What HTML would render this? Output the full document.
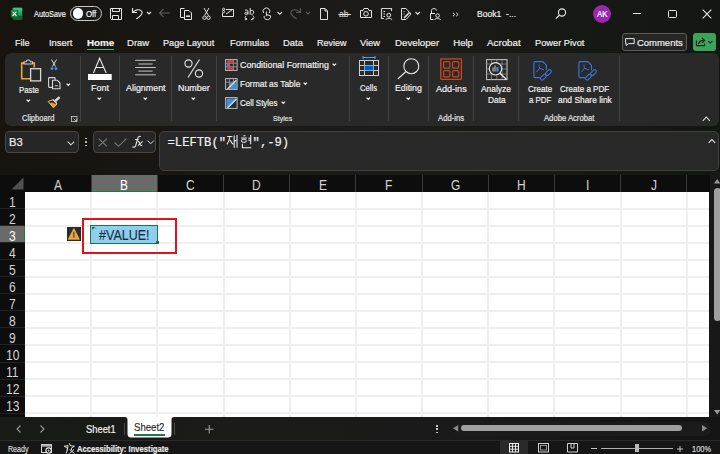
<!DOCTYPE html><html><head><meta charset="utf-8"><style>
html,body{margin:0;padding:0;}
body{width:720px;height:454px;overflow:hidden;position:relative;background:linear-gradient(90deg,#17130f 0%,#1a1814 30%,#1c1b19 50%,#181915 72%,#131712 100%);font-family:"Liberation Sans",sans-serif;}
.t{position:absolute;white-space:nowrap;line-height:1;transform-origin:0 0;-webkit-text-stroke:0.2px currentColor;}
.r{position:absolute;}
.s{position:absolute;overflow:visible;}
</style></head><body>
<svg class="s" style="left:10px;top:7px" width="13" height="13" viewBox="0 0 13 13"><rect x="2.8" y="0.7" width="9.4" height="11.7" rx="0.8" fill="#21a366"/><rect x="2.8" y="0.7" width="9.4" height="4" rx="0.8" fill="#33c481"/><rect x="2.8" y="8.6" width="9.4" height="3.8" rx="0.8" fill="#185c37"/><rect x="0.8" y="3" width="7.5" height="7.4" rx="0.7" fill="#107c41"/><path d="M2.6 4.6 L6.4 8.9 M6.4 4.6 L2.6 8.9" stroke="#fff" stroke-width="1.15"/></svg>
<div class="t" style="left:33.50px;top:10px;font-size:8.58px;color:#f0f0f0;transform:scaleX(0.855);">AutoSave</div>
<div class="r" style="left:70px;top:6px;width:31.5px;height:15px;border:1px solid #c8c8c8;border-radius:8px;box-sizing:border-box;background:#1c1b19"></div>
<div class="r" style="left:72.5px;top:8.4px;width:10.5px;height:10.5px;background:#fff;border-radius:50%"></div>
<div class="t" style="left:86.30px;top:10px;font-size:8.72px;color:#f0f0f0;transform:scaleX(0.898);">Off</div>
<svg class="s" style="left:109px;top:7px" width="14" height="14" viewBox="0 0 14 14"><path d="M1.5 1.5 H12.5 V12.5 H2.5 L1.5 11.5 Z M3.5 1.5 V4.5 H10.5 V1.5 M3.5 12.5 V8.5 H9.5 V12.5" fill="none" stroke="#e4e4e4" stroke-width="1"/></svg>
<svg class="s" style="left:130px;top:7px" width="22" height="13" viewBox="0 0 22 13"><path d="M2.5 1 V5.5 H7" fill="none" stroke="#e4e4e4" stroke-width="1.1"/><path d="M2.8 5.3 C5 2.6 9.2 2 11.3 3.8 C13.2 5.6 12.5 8 6.3 12" fill="none" stroke="#e4e4e4" stroke-width="1.1"/><path d="M17 5 L19 7 L21 5" fill="none" stroke="#e4e4e4" stroke-width="1.1"/></svg>
<svg class="s" style="left:158px;top:8px" width="13" height="10" viewBox="0 0 13 10"><path d="M12 5 H1.5 M5.5 1 L1.5 5 L5.5 9" fill="none" stroke="#5c5c5c" stroke-width="1.1"/></svg>
<svg class="s" style="left:179px;top:7px" width="14" height="14" viewBox="0 0 14 14"><path d="M5.5 10.5 H1.5 V1.5 H5.5" fill="none" stroke="#e4e4e4" stroke-width="1"/><path d="M5.5 3.5 H10 L12.5 6 V12.5 H5.5 Z" fill="none" stroke="#e4e4e4" stroke-width="1"/><path d="M7 9.2 H11" stroke="#e4e4e4" stroke-width="1.6"/></svg>
<svg class="s" style="left:202px;top:7px" width="9" height="14" viewBox="0 0 9 14"><path d="M2 1 L6.5 8.6 M7 1 L2.5 8.6" stroke="#e4e4e4" stroke-width="1" fill="none"/><circle cx="2.5" cy="10.7" r="1.7" fill="none" stroke="#e4e4e4" stroke-width="1"/><circle cx="6.5" cy="10.7" r="1.7" fill="none" stroke="#e4e4e4" stroke-width="1"/></svg>
<svg class="s" style="left:221px;top:7px" width="14" height="12" viewBox="0 0 14 12"><path d="M5 2.5 H12.5 V9.5 H1.5 V6" fill="none" stroke="#e4e4e4" stroke-width="1"/><circle cx="2.6" cy="2.2" r="1.1" fill="none" stroke="#e4e4e4" stroke-width="0.9"/><circle cx="2.6" cy="4.6" r="1.1" fill="none" stroke="#e4e4e4" stroke-width="0.9"/><path d="M5 7 L11 3" stroke="#e4e4e4" stroke-width="1"/></svg>
<svg class="s" style="left:243px;top:7px" width="13" height="14" viewBox="0 0 13 14"><path d="M2 3.3 C3.4 2.6 5 3 5 4.5 V7.4 M5 5.3 C3 5 1.7 5.6 1.7 6.4 C1.7 7.6 3.9 7.6 5 6.5 M7.2 1 V7.4 M7.2 4.3 C8 2.9 10.7 3 10.7 5.2 C10.7 7.6 8 7.8 7.2 6.4" fill="none" stroke="#e4e4e4" stroke-width="1"/><path d="M3.2 8.8 C1.7 9.8 1.8 11.8 3.6 12.6 M1.9 12.8 L3.6 12.6 L3.4 11 M9.6 8.6 C11.3 9.4 11.4 11.7 9.6 12.6 L8.2 12.8 M9.8 11.2 L8.2 12.8" fill="none" stroke="#e4e4e4" stroke-width="0.95"/></svg>
<svg class="s" style="left:261px;top:7px" width="11" height="14" viewBox="0 0 11 14"><path d="M2.5 6 A3.4 3.4 0 1 1 8.3 6.2" fill="none" stroke="#e4e4e4" stroke-width="1"/><path d="M5.4 4.5 V9.2 M3.2 9 C2.6 11 4.2 12.6 6.3 12.6 C8.5 12.6 10 11 9.6 8.8 L5.4 7.6" fill="none" stroke="#e4e4e4" stroke-width="1"/></svg>
<svg class="s" style="left:276px;top:11px" width="8" height="5" viewBox="0 0 8 5"><path d="M1.5 1 L3.8 3.3 L6 1" fill="none" stroke="#e4e4e4" stroke-width="1.1"/></svg>
<svg class="s" style="left:290px;top:7px" width="12" height="13" viewBox="0 0 12 13"><path d="M10.5 1 V5.5 H6" fill="none" stroke="#5a5a5a" stroke-width="1.1"/><path d="M10.2 5.3 C8 2.6 3.8 2 1.7 3.8 C-0.2 5.6 0.5 8 6.7 12" fill="none" stroke="#5a5a5a" stroke-width="1.1"/></svg>
<svg class="s" style="left:305px;top:11px" width="7" height="5" viewBox="0 0 7 5"><path d="M1 1 L3 3 L5 1" fill="none" stroke="#5a5a5a" stroke-width="1.1"/></svg>
<svg class="s" style="left:319px;top:7px" width="10" height="14" viewBox="0 0 10 14"><path d="M1.5 1.5 H6 L8.5 4 V12.5 H1.5 Z M6 1.5 V4 H8.5" fill="none" stroke="#e4e4e4" stroke-width="1"/></svg>
<svg class="s" style="left:338px;top:9px" width="14" height="10" viewBox="0 0 14 10"><text x="1" y="7.8" font-family="Liberation Sans" font-size="8.5" fill="#e4e4e4">ab</text><path d="M0.5 5.5 H13" stroke="#e4e4e4" stroke-width="1"/></svg>
<svg class="s" style="left:359px;top:7px" width="14" height="12" viewBox="0 0 14 12"><path d="M1.5 3.5 H4 L5 1.5 H9 L10 3.5 H12.5 V10.5 H1.5 Z" fill="none" stroke="#e4e4e4" stroke-width="1"/><circle cx="7" cy="6.8" r="2.3" fill="none" stroke="#e4e4e4" stroke-width="1"/></svg>
<svg class="s" style="left:380px;top:7px" width="13" height="14" viewBox="0 0 13 14"><path d="M1.5 1.5 H11.5 V4 M1.5 1.5 V11.5 H4" fill="none" stroke="#cfcfcf" stroke-width="1.2"/><path d="M3.5 4.5 H5 M3.5 7 H5 M3.5 9.5 H5" stroke="#e4e4e4" stroke-width="1"/><circle cx="8.8" cy="8.2" r="1.9" fill="none" stroke="#e4e4e4" stroke-width="1"/><path d="M5.8 12.8 C6.3 10.8 11.3 10.8 11.8 12.8" fill="none" stroke="#e4e4e4" stroke-width="1"/></svg>
<svg class="s" style="left:400px;top:7px" width="12" height="14" viewBox="0 0 12 14"><path d="M1.5 1.5 H6 L11 7 L6 12.5 H1.5 Z" fill="none" stroke="#e4e4e4" stroke-width="1"/><path d="M4 11 L9.5 5.5" stroke="#e4e4e4" stroke-width="1.6"/><path d="M3.5 4.5 H4.5 M3.5 7 H4.5" stroke="#e4e4e4" stroke-width="0.9"/></svg>
<svg class="s" style="left:414px;top:11px" width="8" height="5" viewBox="0 0 8 5"><path d="M1.5 1 L3.7 3.2 L5.9 1" fill="none" stroke="#e4e4e4" stroke-width="1.1"/></svg>
<svg class="s" style="left:429px;top:7px" width="13" height="14" viewBox="0 0 13 14"><path d="M2.5 6 V3.5 C2.5 0.9 7.5 0.9 7.5 3.5" fill="none" stroke="#e4e4e4" stroke-width="1"/><path d="M4.5 12.5 H1.5 V6.5 H6" fill="none" stroke="#e4e4e4" stroke-width="1"/><circle cx="8.6" cy="8.6" r="1.8" fill="none" stroke="#e4e4e4" stroke-width="1"/><path d="M5.6 13 C6.1 11 11 11 11.6 13" fill="none" stroke="#e4e4e4" stroke-width="1"/></svg>
<svg class="s" style="left:451.5px;top:12px" width="8" height="5" viewBox="0 0 8 5"><path d="M1 0.8 L2.8 2.5 L1 4.2 M4.3 0.8 L6.1 2.5 L4.3 4.2" fill="none" stroke="#e8e8e8" stroke-width="1"/></svg>
<div class="t" style="left:476.70px;top:9px;font-size:9.74px;color:#f0f0f0;transform:scaleX(0.881);white-space:pre;">Book1  -...</div>
<svg class="s" style="left:555px;top:8px" width="12" height="11" viewBox="0 0 12 11"><circle cx="7" cy="4.5" r="3.6" fill="none" stroke="#e8e8e8" stroke-width="1.1"/><path d="M4.4 7.2 L0.8 10.6" stroke="#e8e8e8" stroke-width="1.2"/></svg>
<div class="r" style="left:593px;top:4.5px;width:18px;height:18px;background:#9b27b0;border-radius:50%"></div>
<div class="t" style="left:596.75px;top:10px;font-size:8.43px;color:#ffffff;transform:scaleX(0.934);">AK</div>
<div class="r" style="left:632.5px;top:12.6px;width:8.5px;height:1px;background:#e8e8e8"></div>
<div class="r" style="left:667.5px;top:9.5px;width:9px;height:8.5px;border:1.1px solid #e8e8e8;border-radius:1.5px;box-sizing:border-box"></div>
<svg class="s" style="left:702px;top:9.2px" width="10" height="10" viewBox="0 0 10 10"><path d="M0.7 0.7 L9.3 9.3 M9.3 0.7 L0.7 9.3" stroke="#e8e8e8" stroke-width="1.1"/></svg>
<div class="t" style="left:14.70px;top:38px;font-size:9.59px;color:#f0f0f0;transform:scaleX(0.938);">File</div>
<div class="t" style="left:48.50px;top:38px;font-size:9.59px;color:#f0f0f0;transform:scaleX(0.980);">Insert</div>
<div class="t" style="left:86.50px;top:38px;font-size:9.59px;color:#f0f0f0;font-weight:bold;transform:scaleX(1.025);">Home</div>
<div class="t" style="left:127.00px;top:38px;font-size:9.59px;color:#f0f0f0;transform:scaleX(0.994);">Draw</div>
<div class="t" style="left:163.25px;top:38px;font-size:9.59px;color:#f0f0f0;transform:scaleX(0.952);">Page Layout</div>
<div class="t" style="left:230.00px;top:38px;font-size:9.59px;color:#f0f0f0;transform:scaleX(0.982);">Formulas</div>
<div class="t" style="left:283.00px;top:38px;font-size:9.59px;color:#f0f0f0;transform:scaleX(0.987);">Data</div>
<div class="t" style="left:316.75px;top:38px;font-size:9.59px;color:#f0f0f0;transform:scaleX(0.938);">Review</div>
<div class="t" style="left:360.00px;top:38px;font-size:9.59px;color:#f0f0f0;transform:scaleX(0.970);">View</div>
<div class="t" style="left:394.50px;top:38px;font-size:9.59px;color:#f0f0f0;transform:scaleX(1.012);">Developer</div>
<div class="t" style="left:453.25px;top:38px;font-size:9.59px;color:#f0f0f0;">Help</div>
<div class="t" style="left:486.75px;top:38px;font-size:9.59px;color:#f0f0f0;transform:scaleX(1.021);">Acrobat</div>
<div class="t" style="left:535.00px;top:38px;font-size:9.59px;color:#f0f0f0;transform:scaleX(0.967);">Power Pivot</div>
<div class="r" style="left:86.5px;top:48.5px;width:27.8px;height:1.8px;background:#4caf6e;border-radius:1px"></div>
<div class="r" style="left:622.2px;top:33px;width:64.5px;height:17.6px;border:1px solid #5c5c5c;border-radius:3px;box-sizing:border-box;background:#262626"></div>
<svg class="s" style="left:625px;top:38px" width="10" height="8" viewBox="0 0 10 8"><path d="M0.6 0.6 H9.2 V5.6 H3.5 L1.2 7.5 V5.6 H0.6 Z" fill="none" stroke="#e8e8e8" stroke-width="1"/></svg>
<div class="t" style="left:637.20px;top:38px;font-size:9.59px;color:#f0f0f0;transform:scaleX(0.988);">Comments</div>
<div class="r" style="left:693px;top:33px;width:23px;height:17.6px;background:#3aa35c;border-radius:3px"></div>
<svg class="s" style="left:695px;top:37px" width="22" height="10" viewBox="0 0 22 10"><path d="M1.5 3.5 V8.6 H9.5 V6.5" fill="none" stroke="#102a18" stroke-width="1.2"/><path d="M3.5 7.2 C4 4.8 5.8 3.4 8.5 3.4" fill="none" stroke="#102a18" stroke-width="1.2"/><path d="M7 0.9 L9.6 3.4 L7 5.9" fill="none" stroke="#102a18" stroke-width="1.2"/><path d="M13.3 4.2 L15.3 6 L17.3 4.2" fill="none" stroke="#102a18" stroke-width="1.1"/></svg>
<div class="r" style="left:5px;top:53px;width:713.5px;height:73px;background:#292929;border-radius:6px"></div>
<div class="r" style="left:80px;top:56px;width:1px;height:65px;background:#424242"></div>
<div class="r" style="left:119px;top:56px;width:1px;height:65px;background:#424242"></div>
<div class="r" style="left:171px;top:56px;width:1px;height:65px;background:#424242"></div>
<div class="r" style="left:216px;top:56px;width:1px;height:65px;background:#424242"></div>
<div class="r" style="left:349px;top:56px;width:1px;height:65px;background:#424242"></div>
<div class="r" style="left:388px;top:56px;width:1px;height:65px;background:#424242"></div>
<div class="r" style="left:428px;top:56px;width:1px;height:65px;background:#424242"></div>
<div class="r" style="left:473px;top:56px;width:1px;height:65px;background:#424242"></div>
<div class="r" style="left:518px;top:56px;width:1px;height:65px;background:#424242"></div>
<div class="r" style="left:619px;top:56px;width:1px;height:65px;background:#424242"></div>
<svg class="s" style="left:19px;top:57px" width="24" height="26" viewBox="0 0 24 26"><path d="M5 6.1 H2.7 V21.7 H11" fill="none" stroke="#f5a524" stroke-width="1.6"/><path d="M13.4 6.1 H15.3 V10.4" fill="none" stroke="#f5a524" stroke-width="1.6"/><path d="M5 7 V4.8 H7 C7.5 2.3 11 2.3 11.5 4.8 H13.4 V7 Z" fill="#292929" stroke="#cfcfcf" stroke-width="1.1"/><rect x="11.6" y="11.7" width="10" height="12.2" fill="#292929" stroke="#d8d8d8" stroke-width="1.3"/></svg>
<div class="t" style="left:18.50px;top:85px;font-size:9.74px;color:#f0f0f0;transform:scaleX(0.799);">Paste</div>
<svg class="s" style="left:26px;top:99px" width="5" height="3.5" viewBox="0 0 5 3.5"><path d="M0.6 0.6 L2.3 2.4 L4.0 0.6" fill="none" stroke="#e6e6e6" stroke-width="1.3"/></svg>
<svg class="s" style="left:50px;top:59px" width="8" height="12" viewBox="0 0 8 12"><path d="M1.5 0.5 L5.5 7.5 M6.5 0.5 L2.5 7.5" stroke="#dcdcdc" stroke-width="1" fill="none"/><circle cx="2" cy="9.6" r="1.5" fill="#3f8fdc" /><circle cx="6" cy="9.6" r="1.5" fill="#3f8fdc"/></svg>
<svg class="s" style="left:47.5px;top:77px" width="13" height="13" viewBox="0 0 13 13"><rect x="0.6" y="0.6" width="6.5" height="9.8" rx="0.8" fill="none" stroke="#d8d8d8" stroke-width="1.1"/><path d="M4.5 3.2 H9.3 L12 6 V11.8 H4.5 Z" fill="#292929" stroke="#d8d8d8" stroke-width="1.1"/><path d="M6.8 8.8 H9.8" stroke="#d8d8d8" stroke-width="1"/></svg>
<svg class="s" style="left:65.5px;top:82.5px" width="5" height="3.5" viewBox="0 0 5 3.5"><path d="M0.6 0.6 L2.3 2.4 L4.0 0.6" fill="none" stroke="#e6e6e6" stroke-width="1.3"/></svg>
<svg class="s" style="left:47px;top:95px" width="14" height="14" viewBox="0 0 14 14"><path d="M2.5 8.5 L6.5 12.3 L9.3 9.3 L5 7.6 Z" fill="#f39c12"/><path d="M1.2 6.5 L6.3 4.6 L10 9 L6.5 12.8 Z" fill="none" stroke="#f3c26b" stroke-width="1"/><path d="M8.2 6 L12.6 2.2" stroke="#d8d8d8" stroke-width="2.4"/><path d="M6 4.6 L9.8 8.6" stroke="#e0e0e0" stroke-width="1.2"/></svg>
<div class="t" style="left:21.50px;top:115px;font-size:8.14px;color:#e0e0e0;transform:scaleX(0.933);">Clipboard</div>
<svg class="s" style="left:71px;top:115.5px" width="6.5" height="6" viewBox="0 0 6.5 6"><rect x="0.5" y="0.5" width="5.5" height="5" fill="none" stroke="#bdbdbd" stroke-width="0.9"/><path d="M2.5 2.5 L5.5 5.5 M5.5 3 V5.5 H3" fill="none" stroke="#bdbdbd" stroke-width="0.9"/></svg>
<svg class="s" style="left:87px;top:57px" width="25" height="23" viewBox="0 0 25 23"><path d="M6.5 16 L12.6 1.2 L19.2 16 M8.6 10.5 H16.6" fill="none" stroke="#e8e8e8" stroke-width="1.1"/><rect x="1" y="17" width="23.7" height="6" fill="#ffffff"/></svg>
<div class="t" style="left:90.90px;top:84px;font-size:9.16px;color:#f0f0f0;transform:scaleX(0.977);">Font</div>
<svg class="s" style="left:97.3px;top:96.5px" width="5" height="3.5" viewBox="0 0 5 3.5"><path d="M0.6 0.6 L2.3 2.4 L4.0 0.6" fill="none" stroke="#e6e6e6" stroke-width="1.3"/></svg>
<svg class="s" style="left:134px;top:59px" width="22" height="17" viewBox="0 0 22 17"><path d="M1.2 1.3 H21.8 M4.4 5 H18.6 M1.2 8.5 H21.8 M4.4 12.1 H18.6 M1.2 15.8 H21.8" stroke="#c4c4c4" stroke-width="1"/></svg>
<div class="t" style="left:125.60px;top:84px;font-size:9.16px;color:#f0f0f0;transform:scaleX(0.972);">Alignment</div>
<svg class="s" style="left:142.7px;top:96.5px" width="5" height="3.5" viewBox="0 0 5 3.5"><path d="M0.6 0.6 L2.3 2.4 L4.0 0.6" fill="none" stroke="#e6e6e6" stroke-width="1.3"/></svg>
<svg class="s" style="left:184px;top:59px" width="20" height="19" viewBox="0 0 20 19"><circle cx="4.5" cy="4.5" r="3.6" fill="none" stroke="#e8e8e8" stroke-width="1.1"/><circle cx="15" cy="14.5" r="3.6" fill="none" stroke="#e8e8e8" stroke-width="1.1"/><path d="M15.5 0.5 L4 18.5" stroke="#e8e8e8" stroke-width="1.1"/></svg>
<div class="t" style="left:178.10px;top:84px;font-size:9.16px;color:#f0f0f0;transform:scaleX(0.970);">Number</div>
<svg class="s" style="left:191.3px;top:96.5px" width="5" height="3.5" viewBox="0 0 5 3.5"><path d="M0.6 0.6 L2.3 2.4 L4.0 0.6" fill="none" stroke="#e6e6e6" stroke-width="1.3"/></svg>
<svg class="s" style="left:224.5px;top:58.5px" width="13" height="12" viewBox="0 0 13 12"><rect x="0.6" y="0.6" width="11.5" height="10.8" fill="none" stroke="#bdbdbd" stroke-width="1"/><path d="M4.3 0.6 V11.4 M8.4 0.6 V11.4 M0.6 4.2 H12 M0.6 7.8 H12" stroke="#9a9a9a" stroke-width="0.9"/><rect x="2.2" y="1.2" width="6" height="2.6" fill="#e33b3b"/><rect x="2.2" y="8.2" width="6" height="2.6" fill="#e33b3b"/><rect x="2" y="4.5" width="2" height="3" fill="#3f8fdc"/></svg>
<div class="t" style="left:239.70px;top:60px;font-size:9.59px;color:#f0f0f0;transform:scaleX(0.922);">Conditional Formatting</div>
<svg class="s" style="left:331.8px;top:63px" width="5" height="3.5" viewBox="0 0 5 3.5"><path d="M0.6 0.6 L2.3 2.4 L4.0 0.6" fill="none" stroke="#e6e6e6" stroke-width="1.3"/></svg>
<svg class="s" style="left:224.5px;top:77.5px" width="13" height="12" viewBox="0 0 13 12"><rect x="0.6" y="0.6" width="11.5" height="10.8" fill="none" stroke="#bdbdbd" stroke-width="1"/><path d="M4.3 0.6 V11.4 M8.4 0.6 V4 M0.6 4.2 H12" stroke="#9a9a9a" stroke-width="0.9"/><path d="M4.5 11 L4.5 5 H12 V11 Z" fill="#3f8fdc"/><path d="M2.5 11 L11.5 2" stroke="#d8d8d8" stroke-width="1.4"/></svg>
<div class="t" style="left:239.70px;top:79px;font-size:9.59px;color:#f0f0f0;transform:scaleX(0.881);">Format as Table</div>
<svg class="s" style="left:302.8px;top:82px" width="5" height="3.5" viewBox="0 0 5 3.5"><path d="M0.6 0.6 L2.3 2.4 L4.0 0.6" fill="none" stroke="#e6e6e6" stroke-width="1.3"/></svg>
<svg class="s" style="left:224.5px;top:96.5px" width="13" height="12" viewBox="0 0 13 12"><rect x="0.6" y="0.6" width="11.5" height="10.8" fill="none" stroke="#bdbdbd" stroke-width="1"/><path d="M1.5 1.5 H11 V3 L2.5 10.5 H1.5 Z" fill="#3f8fdc"/><path d="M2.5 11 L11.5 2" stroke="#d8d8d8" stroke-width="1.4"/></svg>
<div class="t" style="left:239.70px;top:98px;font-size:9.59px;color:#f0f0f0;transform:scaleX(0.828);">Cell Styles</div>
<svg class="s" style="left:280.7px;top:101px" width="5" height="3.5" viewBox="0 0 5 3.5"><path d="M0.6 0.6 L2.3 2.4 L4.0 0.6" fill="none" stroke="#e6e6e6" stroke-width="1.3"/></svg>
<div class="t" style="left:272.80px;top:115px;font-size:7.85px;color:#e0e0e0;transform:scaleX(0.898);">Styles</div>
<svg class="s" style="left:358px;top:55px" width="22" height="22" viewBox="0 0 22 22"><path d="M5 2.5 H17 M5 1 V4 M17 1 V4" stroke="#4aa3ea" stroke-width="1.1"/><rect x="1.5" y="5.5" width="19" height="15" fill="none" stroke="#d0d0d0" stroke-width="1"/><path d="M6.5 5.5 V20.5 M15.5 5.5 V20.5 M1.5 10.5 H20.5 M1.5 15.5 H20.5" stroke="#c8c8c8" stroke-width="1"/><rect x="6.5" y="10.5" width="9" height="5" fill="#0a5ab8" stroke="#5cb3f0" stroke-width="1"/></svg>
<div class="t" style="left:360.30px;top:84px;font-size:9.16px;color:#f0f0f0;transform:scaleX(0.835);">Cells</div>
<svg class="s" style="left:366.4px;top:96.5px" width="5" height="3.5" viewBox="0 0 5 3.5"><path d="M0.6 0.6 L2.3 2.4 L4.0 0.6" fill="none" stroke="#e6e6e6" stroke-width="1.3"/></svg>
<svg class="s" style="left:396.5px;top:57.5px" width="23" height="22" viewBox="0 0 23 22"><circle cx="14.3" cy="8.2" r="7.5" fill="none" stroke="#e8e8e8" stroke-width="1.1"/><path d="M9 13.5 L0.8 21" stroke="#e8e8e8" stroke-width="1.1"/></svg>
<div class="t" style="left:394.60px;top:84px;font-size:9.16px;color:#f0f0f0;transform:scaleX(0.957);">Editing</div>
<svg class="s" style="left:406px;top:96.5px" width="5" height="3.5" viewBox="0 0 5 3.5"><path d="M0.6 0.6 L2.3 2.4 L4.0 0.6" fill="none" stroke="#e6e6e6" stroke-width="1.3"/></svg>
<svg class="s" style="left:440px;top:58px" width="23" height="23" viewBox="0 0 23 23"><rect x="0.8" y="0.8" width="20.6" height="20.6" rx="0.8" fill="none" stroke="#c9481d" stroke-width="1.3"/><rect x="3.6" y="3.6" width="6.2" height="6.6" rx="1" fill="none" stroke="#c9481d" stroke-width="1.2"/><rect x="12.6" y="3.6" width="6.1" height="6.6" rx="1" fill="none" stroke="#c9481d" stroke-width="1.2"/><rect x="3.6" y="12.6" width="6.2" height="6.2" rx="1" fill="none" stroke="#c9481d" stroke-width="1.2"/><rect x="12.6" y="12.6" width="6.1" height="6.2" rx="1" fill="none" stroke="#c9481d" stroke-width="1.2"/></svg>
<div class="t" style="left:435.50px;top:84px;font-size:9.45px;color:#f0f0f0;transform:scaleX(0.958);">Add-ins</div>
<div class="t" style="left:437.60px;top:115px;font-size:8.14px;color:#e0e0e0;transform:scaleX(0.946);">Add-ins</div>
<svg class="s" style="left:485.5px;top:58.5px" width="22" height="22" viewBox="0 0 22 22"><rect x="0.6" y="0.6" width="20.4" height="20" fill="none" stroke="#bdbdbd" stroke-width="1.1"/><path d="M0.6 5 H21 M0.6 10 H21 M0.6 15 H21 M5.5 0.6 V20.6 M10.8 0.6 V20.6 M16 0.6 V20.6" stroke="#8a8a8a" stroke-width="0.8"/><circle cx="9.5" cy="9.8" r="6.2" fill="#292929" stroke="#e8e8e8" stroke-width="1.2"/><path d="M14 14.3 L20.5 20.5" stroke="#e8e8e8" stroke-width="1.4"/><path d="M7 8.5 V12.5 M9 6.5 V12.5" stroke="#d0d0d0" stroke-width="1"/><rect x="10.3" y="8" width="2.2" height="4.5" fill="#3f8fdc"/></svg>
<div class="t" style="left:481.30px;top:84px;font-size:9.45px;color:#f0f0f0;transform:scaleX(0.892);">Analyze</div>
<div class="t" style="left:487.50px;top:95px;font-size:9.45px;color:#f0f0f0;transform:scaleX(0.882);">Data</div>
<svg class="s" style="left:532px;top:59px" width="21" height="23" viewBox="0 0 21 23"><path d="M8 18.6 H3.2 Q1.9 18.6 1.9 17.3 V3.9 Q1.9 2.6 3.2 2.6 H10.8 L14.4 6.2 V11.2" fill="none" stroke="#3a74da" stroke-width="1.15"/><path d="M7.4 5.2 C6.6 5.4 6.8 7 7.6 9.3 L4.3 13.2 M7.6 9.3 L12 10.9" fill="none" stroke="#3a74da" stroke-width="1"/><rect x="-3.4" y="-1.7" width="6.8" height="3.4" rx="1.7" transform="translate(11.4,18.2) rotate(-45)" fill="none" stroke="#3a74da" stroke-width="1.15"/><rect x="-3.4" y="-1.7" width="6.8" height="3.4" rx="1.7" transform="translate(16.4,13.6) rotate(-45)" fill="none" stroke="#3a74da" stroke-width="1.15"/></svg>
<svg class="s" style="left:577px;top:59px" width="21" height="23" viewBox="0 0 21 23"><path d="M8 18.6 H3.2 Q1.9 18.6 1.9 17.3 V3.9 Q1.9 2.6 3.2 2.6 H10.8 L14.4 6.2 V11.2" fill="none" stroke="#3a74da" stroke-width="1.15"/><path d="M7.4 5.2 C6.6 5.4 6.8 7 7.6 9.3 L4.3 13.2 M7.6 9.3 L12 10.9" fill="none" stroke="#3a74da" stroke-width="1"/><rect x="-3.4" y="-1.7" width="6.8" height="3.4" rx="1.7" transform="translate(11.4,18.2) rotate(-45)" fill="none" stroke="#3a74da" stroke-width="1.15"/><rect x="-3.4" y="-1.7" width="6.8" height="3.4" rx="1.7" transform="translate(16.4,13.6) rotate(-45)" fill="none" stroke="#3a74da" stroke-width="1.15"/></svg>
<div class="t" style="left:527.70px;top:84px;font-size:9.45px;color:#f0f0f0;transform:scaleX(0.857);">Create</div>
<div class="t" style="left:528.70px;top:95px;font-size:9.45px;color:#f0f0f0;transform:scaleX(0.836);">a PDF</div>
<div class="t" style="left:560.00px;top:84px;font-size:9.45px;color:#f0f0f0;transform:scaleX(0.853);">Create a PDF</div>
<div class="t" style="left:557.70px;top:95px;font-size:9.45px;color:#f0f0f0;transform:scaleX(0.892);">and Share link</div>
<div class="t" style="left:543.60px;top:115px;font-size:8.14px;color:#e0e0e0;transform:scaleX(0.944);">Adobe Acrobat</div>
<svg class="s" style="left:702px;top:115.5px" width="9" height="5.5" viewBox="0 0 9 5.5"><path d="M0.8 4.8 L4.3 1 L7.8 4.8" fill="none" stroke="#e0e0e0" stroke-width="1.1"/></svg>
<div class="r" style="left:5.3px;top:131px;width:73.4px;height:22px;background:#262626;border:1px solid #474747;border-radius:4px;box-sizing:border-box"></div>
<div class="t" style="left:8.80px;top:137px;font-size:11.48px;color:#f0f0f0;transform:scaleX(0.976);">B3</div>
<svg class="s" style="left:67px;top:140.5px" width="8" height="4.5" viewBox="0 0 8 4.5"><path d="M0.6 0.6 L3.9 3.8 L7.2 0.6" fill="none" stroke="#dcdcdc" stroke-width="1.1"/></svg>
<div class="r" style="left:85.2px;top:137.5px;width:1.6px;height:1.6px;background:#d0d0d0;border-radius:50%"></div>
<div class="r" style="left:85.2px;top:141.2px;width:1.6px;height:1.6px;background:#d0d0d0;border-radius:50%"></div>
<div class="r" style="left:85.2px;top:144.9px;width:1.6px;height:1.6px;background:#d0d0d0;border-radius:50%"></div>
<div class="r" style="left:93px;top:131.3px;width:63.1px;height:21.6px;background:#262626;border:1px solid #474747;border-radius:4px;box-sizing:border-box"></div>
<svg class="s" style="left:97.8px;top:138.2px" width="10" height="9" viewBox="0 0 10 9"><path d="M0.6 0.6 L9 8.4 M9 0.6 L0.6 8.4" stroke="#7a7a7a" stroke-width="1.1"/></svg>
<svg class="s" style="left:113.8px;top:138.2px" width="13" height="9" viewBox="0 0 13 9"><path d="M0.6 4.5 L4.5 8.3 L12.4 0.6" fill="none" stroke="#7a7a7a" stroke-width="1.1"/></svg>
<svg class="s" style="left:130px;top:134px" width="15" height="15" viewBox="0 0 15 15"><path d="M10.6 2.9 C9.9 2.1 8.3 2.2 7.9 4 L5.6 11.8 C5.2 13.2 3.6 13.5 2.5 12.7" fill="none" stroke="#e2e2e2" stroke-width="1.15"/><path d="M5.1 5.6 H8.7" stroke="#e2e2e2" stroke-width="1"/><path d="M7.9 7.4 C8.9 7.2 9.3 8 9.8 9.5 C10.3 11 10.8 11.8 12.3 11.7 M12.7 7.4 L8 11.7" fill="none" stroke="#e2e2e2" stroke-width="1.05"/></svg>
<svg class="s" style="left:147px;top:140px" width="7.5" height="4.5" viewBox="0 0 7.5 4.5"><path d="M0.6 0.6 L3.7 3.8 L6.8 0.6" fill="none" stroke="#dcdcdc" stroke-width="1"/></svg>
<div class="r" style="left:158.6px;top:131.3px;width:160px;height:39.7px;background:#282828;border:1px solid #414141;border-radius:5px;box-sizing:border-box;width:560px"></div>
<div class="t" style="left:167.5px;top:137.15px;font-family:'Liberation Mono',monospace;font-size:12.2px;color:#f0f0f0;">=LEFTB("</div>
<div class="t" style="left:252.6px;top:137.15px;font-family:'Liberation Mono',monospace;font-size:12.2px;color:#f0f0f0;">",-9)</div>
<svg class="s" style="left:224px;top:134px" width="30" height="15" viewBox="0 0 30 15"><path d="M3.2 2.4 H8.4 M5.9 2.6 C5.5 6 4.5 8.5 2.9 10.3 M6.1 6 C7 8 8 9.3 9.3 10.3 M10.2 1.4 V13.7 M10.2 6.6 H12.3 M13 1.1 V13.7 M19.4 1.8 H21.5 M17.2 3.9 H22.7 M26.7 1.1 V10.3 M24.3 4.2 H26.7 M24.3 6.3 H26.7 M18.4 9.7 V13.7 H27.3" fill="none" stroke="#f0f0f0" stroke-width="1.05"/><ellipse cx="19.9" cy="6.8" rx="2.5" ry="1.6" fill="none" stroke="#f0f0f0" stroke-width="1"/></svg>
<svg class="s" style="left:708px;top:138.8px" width="8" height="4.5" viewBox="0 0 8 4.5"><path d="M0.6 3.8 L3.9 0.6 L7.2 3.8" fill="none" stroke="#e0e0e0" stroke-width="1.1"/></svg>
<div class="r" style="left:0px;top:175px;width:709.5px;height:16.599999999999994px;background:#0d0d0d"></div>
<div class="r" style="left:0px;top:191.6px;width:24.7px;height:225.4px;background:#0d0d0d"></div>
<div class="r" style="left:24.7px;top:191.6px;width:684.8px;height:225.4px;background:#ffffff"></div>
<svg class="s" style="left:10.5px;top:177px" width="13" height="13" viewBox="0 0 13 13"><path d="M12.5 0.5 V12.5 H0.5 Z" fill="#505050"/></svg>
<div class="r" style="left:91px;top:175px;width:1px;height:16.599999999999994px;background:#3a3a3a"></div>
<div class="r" style="left:157px;top:175px;width:1px;height:16.599999999999994px;background:#3a3a3a"></div>
<div class="r" style="left:223px;top:175px;width:1px;height:16.599999999999994px;background:#3a3a3a"></div>
<div class="r" style="left:289px;top:175px;width:1px;height:16.599999999999994px;background:#3a3a3a"></div>
<div class="r" style="left:355px;top:175px;width:1px;height:16.599999999999994px;background:#3a3a3a"></div>
<div class="r" style="left:422px;top:175px;width:1px;height:16.599999999999994px;background:#3a3a3a"></div>
<div class="r" style="left:488px;top:175px;width:1px;height:16.599999999999994px;background:#3a3a3a"></div>
<div class="r" style="left:554px;top:175px;width:1px;height:16.599999999999994px;background:#3a3a3a"></div>
<div class="r" style="left:620px;top:175px;width:1px;height:16.599999999999994px;background:#3a3a3a"></div>
<div class="r" style="left:686px;top:175px;width:1px;height:16.599999999999994px;background:#3a3a3a"></div>
<div class="r" style="left:92px;top:175px;width:65px;height:16.599999999999994px;background:#6a6a6a"></div>
<div class="r" style="left:92px;top:190.6px;width:65px;height:1.2px;background:#1e7a45"></div>
<div class="t" style="left:53.94px;top:179px;font-size:13.81px;color:#d4d4d4;transform:scaleX(0.870);-webkit-text-stroke:0;">A</div>
<div class="t" style="left:120.28px;top:179px;font-size:13.81px;color:#ffffff;transform:scaleX(0.870);-webkit-text-stroke:0;">B</div>
<div class="t" style="left:186.13px;top:179px;font-size:13.81px;color:#d4d4d4;transform:scaleX(0.870);-webkit-text-stroke:0;">C</div>
<div class="t" style="left:252.31px;top:179px;font-size:13.81px;color:#d4d4d4;transform:scaleX(0.870);-webkit-text-stroke:0;">D</div>
<div class="t" style="left:318.82px;top:179px;font-size:13.81px;color:#d4d4d4;transform:scaleX(0.870);-webkit-text-stroke:0;">E</div>
<div class="t" style="left:385.34px;top:179px;font-size:13.81px;color:#d4d4d4;transform:scaleX(0.870);-webkit-text-stroke:0;">F</div>
<div class="t" style="left:450.52px;top:179px;font-size:13.81px;color:#d4d4d4;transform:scaleX(0.870);-webkit-text-stroke:0;">G</div>
<div class="t" style="left:517.03px;top:179px;font-size:13.81px;color:#d4d4d4;transform:scaleX(0.870);-webkit-text-stroke:0;">H</div>
<div class="t" style="left:585.88px;top:179px;font-size:13.81px;color:#d4d4d4;transform:scaleX(0.870);-webkit-text-stroke:0;">I</div>
<div class="t" style="left:650.73px;top:179px;font-size:13.81px;color:#d4d4d4;transform:scaleX(0.870);-webkit-text-stroke:0;">J</div>
<div class="r" style="left:90px;top:191.6px;width:2px;height:225.4px;background:#efefef"></div>
<div class="r" style="left:156px;top:191.6px;width:2px;height:225.4px;background:#efefef"></div>
<div class="r" style="left:223px;top:191.6px;width:2px;height:225.4px;background:#efefef"></div>
<div class="r" style="left:289px;top:191.6px;width:2px;height:225.4px;background:#efefef"></div>
<div class="r" style="left:355px;top:191.6px;width:2px;height:225.4px;background:#efefef"></div>
<div class="r" style="left:421px;top:191.6px;width:2px;height:225.4px;background:#efefef"></div>
<div class="r" style="left:487px;top:191.6px;width:2px;height:225.4px;background:#efefef"></div>
<div class="r" style="left:553px;top:191.6px;width:2px;height:225.4px;background:#efefef"></div>
<div class="r" style="left:620px;top:191.6px;width:2px;height:225.4px;background:#efefef"></div>
<div class="r" style="left:686px;top:191.6px;width:2px;height:225.4px;background:#efefef"></div>
<div class="r" style="left:24.7px;top:208px;width:684.8px;height:2px;background:#efefef"></div>
<div class="r" style="left:0px;top:208px;width:24.7px;height:1px;background:#232323"></div>
<div class="r" style="left:24.7px;top:225px;width:684.8px;height:2px;background:#efefef"></div>
<div class="r" style="left:0px;top:225px;width:24.7px;height:1px;background:#232323"></div>
<div class="r" style="left:24.7px;top:242px;width:684.8px;height:2px;background:#efefef"></div>
<div class="r" style="left:0px;top:242px;width:24.7px;height:1px;background:#232323"></div>
<div class="r" style="left:24.7px;top:259px;width:684.8px;height:2px;background:#efefef"></div>
<div class="r" style="left:0px;top:259px;width:24.7px;height:1px;background:#232323"></div>
<div class="r" style="left:24.7px;top:276px;width:684.8px;height:2px;background:#efefef"></div>
<div class="r" style="left:0px;top:276px;width:24.7px;height:1px;background:#232323"></div>
<div class="r" style="left:24.7px;top:293px;width:684.8px;height:2px;background:#efefef"></div>
<div class="r" style="left:0px;top:293px;width:24.7px;height:1px;background:#232323"></div>
<div class="r" style="left:24.7px;top:310px;width:684.8px;height:2px;background:#efefef"></div>
<div class="r" style="left:0px;top:310px;width:24.7px;height:1px;background:#232323"></div>
<div class="r" style="left:24.7px;top:327px;width:684.8px;height:2px;background:#efefef"></div>
<div class="r" style="left:0px;top:327px;width:24.7px;height:1px;background:#232323"></div>
<div class="r" style="left:24.7px;top:344px;width:684.8px;height:2px;background:#efefef"></div>
<div class="r" style="left:0px;top:344px;width:24.7px;height:1px;background:#232323"></div>
<div class="r" style="left:24.7px;top:361px;width:684.8px;height:2px;background:#efefef"></div>
<div class="r" style="left:0px;top:362px;width:24.7px;height:1px;background:#232323"></div>
<div class="r" style="left:24.7px;top:378px;width:684.8px;height:2px;background:#efefef"></div>
<div class="r" style="left:0px;top:379px;width:24.7px;height:1px;background:#232323"></div>
<div class="r" style="left:24.7px;top:395px;width:684.8px;height:2px;background:#efefef"></div>
<div class="r" style="left:0px;top:396px;width:24.7px;height:1px;background:#232323"></div>
<div class="r" style="left:24.7px;top:412px;width:684.8px;height:2px;background:#efefef"></div>
<div class="r" style="left:0px;top:413px;width:24.7px;height:1px;background:#232323"></div>
<div class="r" style="left:0px;top:226px;width:24.7px;height:16px;background:#6a6a6a"></div>
<div class="r" style="left:24.099999999999998px;top:226px;width:1.2px;height:16px;background:#1e7a45"></div>
<div class="t" style="left:9.20px;top:195px;font-size:14.03px;color:#d4d4d4;transform:scaleX(0.860);-webkit-text-stroke:0;">1</div>
<div class="t" style="left:9.20px;top:212px;font-size:14.03px;color:#d4d4d4;transform:scaleX(0.860);-webkit-text-stroke:0;">2</div>
<div class="t" style="left:9.20px;top:229px;font-size:14.03px;color:#ffffff;transform:scaleX(0.860);-webkit-text-stroke:0;">3</div>
<div class="t" style="left:9.20px;top:246px;font-size:14.03px;color:#d4d4d4;transform:scaleX(0.860);-webkit-text-stroke:0;">4</div>
<div class="t" style="left:9.20px;top:263px;font-size:14.03px;color:#d4d4d4;transform:scaleX(0.860);-webkit-text-stroke:0;">5</div>
<div class="t" style="left:9.20px;top:280px;font-size:14.03px;color:#d4d4d4;transform:scaleX(0.860);-webkit-text-stroke:0;">6</div>
<div class="t" style="left:9.20px;top:297px;font-size:14.03px;color:#d4d4d4;transform:scaleX(0.860);-webkit-text-stroke:0;">7</div>
<div class="t" style="left:9.20px;top:314px;font-size:14.03px;color:#d4d4d4;transform:scaleX(0.860);-webkit-text-stroke:0;">8</div>
<div class="t" style="left:9.20px;top:331px;font-size:14.03px;color:#d4d4d4;transform:scaleX(0.860);-webkit-text-stroke:0;">9</div>
<div class="t" style="left:5.84px;top:348px;font-size:14.03px;color:#d4d4d4;transform:scaleX(0.860);-webkit-text-stroke:0;">10</div>
<div class="t" style="left:6.29px;top:365px;font-size:14.03px;color:#d4d4d4;transform:scaleX(0.860);-webkit-text-stroke:0;">11</div>
<div class="t" style="left:5.84px;top:382px;font-size:14.03px;color:#d4d4d4;transform:scaleX(0.860);-webkit-text-stroke:0;">12</div>
<div class="t" style="left:5.84px;top:399px;font-size:14.03px;color:#d4d4d4;transform:scaleX(0.860);-webkit-text-stroke:0;">13</div>
<div class="r" style="left:90.1px;top:225px;width:67.7px;height:18.7px;background:#8ecfef;border:1px solid #217346;box-sizing:border-box"></div>
<svg class="s" style="left:92px;top:227px" width="4" height="3" viewBox="0 0 4 3"><path d="M0 0 H3.8 L0 2.8 Z" fill="#1e7145"/></svg>
<div class="r" style="left:155.8px;top:241.2px;width:3px;height:3px;background:#1e7145"></div>
<div class="t" style="left:98.75px;top:228px;font-size:14.10px;color:#1c2a40;transform:scaleX(0.888);-webkit-text-stroke:0.1px currentColor;">#VALUE!</div>
<div class="r" style="left:67px;top:226.5px;width:14px;height:14px;background:#2b2b2b"></div>
<svg class="s" style="left:67px;top:226.5px" width="14" height="14" viewBox="0 0 14 14"><path d="M6.9 1.4 L12.4 12.3 H1.2 Z" fill="#f0a330" stroke="#f5c46a" stroke-width="0.6"/><path d="M6.9 4.8 V10.6" stroke="#2e2410" stroke-width="0.9"/></svg>
<div class="r" style="left:81.6px;top:218px;width:95px;height:35.8px;border:2.9px solid #e2121c;box-sizing:border-box"></div>
<div class="r" style="left:709.5px;top:171.5px;width:10.5px;height:245.5px;background:#181818"></div>
<svg class="s" style="left:713.7px;top:179px" width="6.5" height="5" viewBox="0 0 6.5 5"><path d="M3.2 0 L6.3 4.6 H0 Z" fill="#9a9a9a"/></svg>
<div class="r" style="left:714px;top:187.5px;width:7px;height:133px;background:#a0a0a0;border-radius:3.5px"></div>
<svg class="s" style="left:713.7px;top:410px" width="6.5" height="5" viewBox="0 0 6.5 5"><path d="M0 0 H6.3 L3.2 4.6 Z" fill="#9a9a9a"/></svg>
<div class="r" style="left:0px;top:417px;width:720px;height:23.3px;background:linear-gradient(90deg,#171a15 0%,#1b1b19 30%,#1a1a1a 60%,#141414 100%)"></div>
<svg class="s" style="left:15.5px;top:424.5px" width="5" height="8" viewBox="0 0 5 8"><path d="M4.5 0.5 L1 4 L4.5 7.5" fill="none" stroke="#9a9a9a" stroke-width="1.1"/></svg>
<svg class="s" style="left:39.5px;top:424.5px" width="5" height="8" viewBox="0 0 5 8"><path d="M0.5 0.5 L4 4 L0.5 7.5" fill="none" stroke="#9a9a9a" stroke-width="1.1"/></svg>
<div class="t" style="left:85.75px;top:424px;font-size:10.90px;color:#f0f0f0;transform:scaleX(0.860);">Sheet1</div>
<div class="r" style="left:124.3px;top:422.5px;width:1px;height:12.5px;background:#4a4a4a"></div>
<div class="r" style="left:174.3px;top:422.5px;width:1px;height:12.5px;background:#4a4a4a"></div>
<svg class="s" style="left:124px;top:417px" width="51" height="21" viewBox="0 0 51 21"><path d="M0 0 C3 0 3.5 1 3.5 3.5 V17 C3.5 19.5 5 20.5 7 20.5 H44 C46 20.5 47.5 19.5 47.5 17 V3.5 C47.5 1 48 0 51 0 Z" fill="#ffffff"/></svg>
<div class="t" style="left:134.40px;top:421px;font-size:11.63px;color:#262626;transform:scaleX(0.827);-webkit-text-stroke:0.15px currentColor;">Sheet2</div>
<div class="r" style="left:134.25px;top:434.2px;width:30.75px;height:1.4px;background:#1e7a45"></div>
<svg class="s" style="left:205px;top:424.5px" width="8.5" height="8.5" viewBox="0 0 8.5 8.5"><path d="M4.25 0 V8.5 M0 4.25 H8.5" stroke="#9a9a9a" stroke-width="1.1"/></svg>
<div class="r" style="left:436.3px;top:425px;width:1.8px;height:1.8px;background:#c8c8c8"></div>
<div class="r" style="left:436.3px;top:428.3px;width:1.8px;height:1.8px;background:#c8c8c8"></div>
<div class="r" style="left:436.3px;top:431.6px;width:1.8px;height:1.8px;background:#c8c8c8"></div>
<div class="r" style="left:450px;top:421.5px;width:261px;height:14px;background:#1b1b1b;border-radius:7px"></div>
<svg class="s" style="left:452.5px;top:425px" width="5.5" height="6.5" viewBox="0 0 5.5 6.5"><path d="M5.2 0 V6.4 L0 3.2 Z" fill="#8a8a8a"/></svg>
<div class="r" style="left:460.8px;top:425.3px;width:221.7px;height:6px;background:#a0a0a0;border-radius:3px"></div>
<svg class="s" style="left:702px;top:425px" width="5.5" height="6.5" viewBox="0 0 5.5 6.5"><path d="M0 0 V6.6 L5.2 3.3 Z" fill="#8a8a8a"/></svg>
<div class="r" style="left:0px;top:440.3px;width:720px;height:13.7px;background:#161616;border-top:1px solid #2a2a2a;box-sizing:border-box"></div>
<div class="t" style="left:7.50px;top:445px;font-size:8.58px;color:#d8d8d8;transform:scaleX(0.827);">Ready</div>
<svg class="s" style="left:40px;top:443px" width="13" height="11" viewBox="0 0 13 11"><rect x="1.5" y="1.5" width="10" height="8" fill="none" stroke="#d8d8d8" stroke-width="1"/><rect x="1.5" y="1.5" width="10" height="2.2" fill="#b0b0b0"/><circle cx="8.6" cy="7.6" r="2.7" fill="#161616" stroke="#ececec" stroke-width="1.1"/><circle cx="8.6" cy="7.6" r="0.9" fill="#ececec"/></svg>
<svg class="s" style="left:63px;top:442px" width="13" height="12" viewBox="0 0 13 12"><path d="M6.2 1.2 L7.3 3.6 L11.4 4.2 L8.3 6.2 L8.6 8 M4.2 8.5 L4.4 6.2 L1.2 4.2 L5.1 3.6 Z" fill="none" stroke="#e0e0e0" stroke-width="1"/><path d="M6.5 7.5 L11.5 11.5 M11 7.5 L6.5 11.5 M4.2 8.5 L3.2 11.5" fill="none" stroke="#e0e0e0" stroke-width="1"/></svg>
<div class="t" style="left:77.00px;top:446px;font-size:8.28px;color:#e8e8e8;font-weight:bold;transform:scaleX(0.927);">Accessibility: Investigate</div>
<div class="r" style="left:500px;top:440.3px;width:28.3px;height:13.7px;background:#2a2a2a"></div>
<svg class="s" style="left:509px;top:443.2px" width="10" height="9.5" viewBox="0 0 10 9.5"><rect x="0.5" y="0.5" width="9" height="8.5" fill="none" stroke="#f0f0f0" stroke-width="1"/><path d="M3.5 0.5 V9 M6.5 0.5 V9 M0.5 3.3 H9.5 M0.5 6.2 H9.5" stroke="#f0f0f0" stroke-width="0.9"/></svg>
<svg class="s" style="left:538px;top:443.2px" width="11" height="9.5" viewBox="0 0 11 9.5"><rect x="0.5" y="0.5" width="10" height="8.5" fill="none" stroke="#d0d0d0" stroke-width="1"/><rect x="2.5" y="2.5" width="6" height="4.5" fill="none" stroke="#a0a0a0" stroke-width="0.9"/></svg>
<svg class="s" style="left:567px;top:443.2px" width="11" height="9.5" viewBox="0 0 11 9.5"><path d="M0.5 0.5 H10.5 V9 H0.5 Z M4 0.5 V5 H7 V0.5" fill="none" stroke="#d0d0d0" stroke-width="1"/></svg>
<div class="r" style="left:591.3px;top:448.2px;width:5.5px;height:1px;background:#c0c0c0"></div>
<div class="r" style="left:601.3px;top:448.3px;width:71.5px;height:1px;background:#b0b0b0"></div>
<div class="r" style="left:634.7px;top:444.2px;width:4.5px;height:8.3px;background:#b8b8b8"></div>
<svg class="s" style="left:677px;top:445.5px" width="6" height="6" viewBox="0 0 6 6"><path d="M3 0 V6 M0 3 H6" stroke="#c0c0c0" stroke-width="1"/></svg>
<div class="t" style="left:691.70px;top:445px;font-size:8.58px;color:#d8d8d8;transform:scaleX(0.870);">100%</div>

</body></html>
